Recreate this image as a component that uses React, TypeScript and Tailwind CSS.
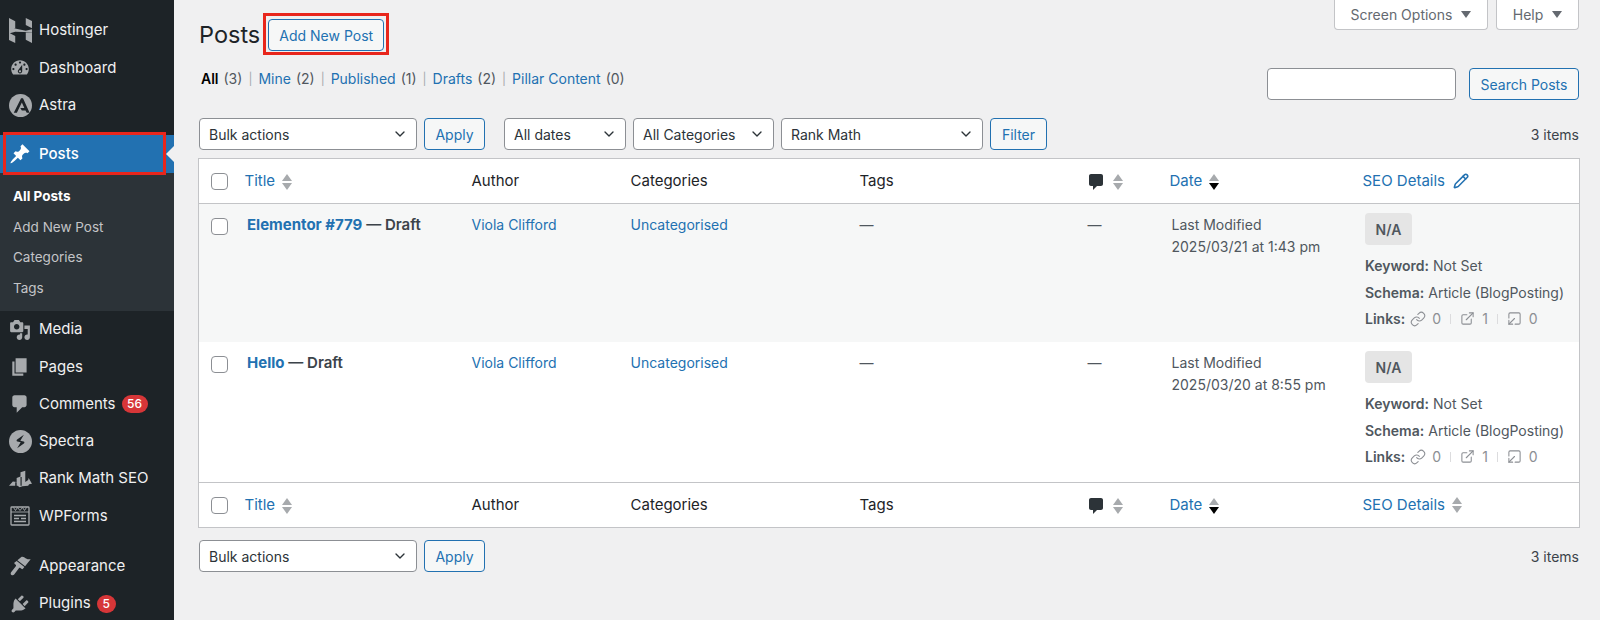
import { ChevronDown, ExternalLink, Link, Pencil, SquareArrowOutDownLeft } from "lucide-react";
import { ReactNode } from "react";

function Dash({ d }: { d: string }) {
  return (
    <svg viewBox="0 0 20 20" className="size-[22px] fill-current">
      <path d={d} />
    </svg>
  );
}

const icons: Record<string, ReactNode> = {
  Hostinger: (
    <svg viewBox="0 0 24 26" className="h-[25px] w-[23px] fill-current">
      <path d="M0 0l6.5 3.4v7.2H0zM17.500 0L24 3.200v7.400l-6.500-3.400zM0 9.600l17.500 3.600 6.500-1.600v3.200l-17.500-.4L0 16.200zM0 15.400l6.500 3.400V26L0 22.800zM17.500 15.200H24V26l-6.500-3.400z" />
    </svg>
  ),
  Dashboard: (
    <Dash d="M3.76 16h12.48c1.1-1.37 1.76-3.11 1.76-5 0-4.42-3.58-8-8-8s-8 3.58-8 8c0 1.89.66 3.63 1.76 5zM10 4c.55 0 1 .45 1 1s-.45 1-1 1-1-.45-1-1 .45-1 1-1zM6 6c.55 0 1 .45 1 1s-.45 1-1 1-1-.45-1-1 .45-1 1-1zm8 0c.55 0 1 .45 1 1s-.45 1-1 1-1-.45-1-1 .45-1 1-1zm-5.37 5.55L12 7v6c0 1.1-.9 2-2 2s-2-.9-2-2c0-.57.24-1.08.63-1.45zM4 10c.55 0 1 .45 1 1s-.45 1-1 1-1-.45-1-1 .45-1 1-1zm12 0c.55 0 1 .45 1 1s-.45 1-1 1-1-.45-1-1 .45-1 1-1zm-5 3c0-.55-.45-1-1-1s-1 .45-1 1 .45 1 1 1 1-.45 1-1z" />
  ),
  Astra: (
    <svg viewBox="0 0 24 24" className="size-[23px]">
      <circle cx="12" cy="12" r="12" className="fill-current" />
      <path d="M12.600 4.500L5 19.500h3.200l5.200-10.600 2.600 5.600h-4.200l1.600 2.600h3.800l1.300 2.400h3L14.600 4.500z" fill="#1d2327" />
    </svg>
  ),
  Posts: (
    <span className="text-white">
      <Dash d="M10.44 3.02l1.82-1.82 6.36 6.35-1.83 1.82c-1.05-.68-2.48-.57-3.41.36l-.75.75c-.92.93-1.04 2.35-.35 3.41l-1.83 1.82-2.41-2.41-2.8 2.79c-.42.42-3.38 2.71-3.8 2.29s1.86-3.39 2.28-3.81l2.79-2.79L4.1 9.36l1.83-1.82c1.05.69 2.48.57 3.4-.36l.75-.75c.93-.92 1.05-2.35.36-3.41z" />
    </span>
  ),
  Media: (
    <Dash d="M13 11V4c0-.55-.45-1-1-1h-1.67L9 1H5L3.67 3H2c-.55 0-1 .45-1 1v7c0 .55.45 1 1 1h10c.55 0 1-.45 1-1zM7 4.5c1.38 0 2.5 1.12 2.5 2.5S8.38 9.5 7 9.5 4.5 8.38 4.5 7 5.62 4.5 7 4.5zM14 6h5v10.5c0 1.38-1.12 2.5-2.5 2.5S14 17.88 14 16.5s1.12-2.5 2.5-2.5c.17 0 .34.02.5.05V9h-3V6zm-4 8.05V13h2v3.5c0 1.38-1.12 2.5-2.5 2.5S7 17.88 7 16.5 8.12 14 9.5 14c.17 0 .34.02.5.05z" />
  ),
  Pages: <Dash d="M6 15V2h10v13H6zm-1 1h8v2H3V5h2v11z" />,
  Comments: (
    <Dash d="M5 2h9c1.1 0 2 .9 2 2v7c0 1.1-.9 2-2 2h-2l-5 5v-5H5c-1.1 0-2-.9-2-2V4c0-1.1.9-2 2-2z" />
  ),
  Spectra: (
    <svg viewBox="0 0 24 24" className="size-[23px]">
      <circle cx="12" cy="12" r="12" className="fill-current" />
      <path
        d="M15.500 5L8.500 9.800c-.9.7-.7 1.800.3 2.100l3.400.9L8.500 19l7-4.800c.9-.7.7-1.800-.3-2.100l-3.400-.9z"
        fill="#1d2327"
      />
    </svg>
  ),
  "Rank Math SEO": (
    <svg viewBox="0 0 24 20" className="h-[20px] w-[23px] fill-current">
      <path d="M0 17l4-4.500 4 .5v-4l4-1.500V3l5-1.500V13l3-2 .5-2 3.500 6-3 .5-1 1.500-6 .500-3 1-2-1.500z" />
      <path d="M6.500 13.500h1.500v4H6.500zM12 8h1.200v9H12z" fill="#1d2327" />
    </svg>
  ),
  WPForms: (
    <svg viewBox="0 0 20 20" className="size-[20px] fill-none stroke-current" strokeWidth="1.300">
      <rect x="1" y="1" width="18" height="18" rx="0.800" />
      <path d="M1 6h18M3.500 1.500l2 3 2-3 2.500 3 2.500-3 2 3 2-3" strokeWidth="0.900" />
      <path d="M4 9.500h12M4 12.500h5M11 12.500h5M4 15.500h12" strokeWidth="1.400" />
    </svg>
  ),
  Appearance: (
    <svg viewBox="0 0 20 20" className="size-[22px] fill-current">
      <path d="M11.500 1.600c1.600-.4 2.600.7 4 1.500 1.200.7 2.700 1 4.200.7l-5.100 6.400-7-5.400z" />
      <path d="M7 5.500l7 5.400-1.300 1.600c-.4.4-1 .5-1.400.1l-1-.8c-.4-.3-1-.2-1.300.2l-4.300 5.800c-.6.800-1.700.9-2.500.3-.8-.6-.9-1.700-.3-2.500l4.300-5.400c.3-.4.300-1-.1-1.300l-.9-.7c-.4-.4-.5-1-.2-1.400z" />
    </svg>
  ),
  Plugins: (
    <Dash d="M13.11 4.360L9.870 7.600 8 5.730l3.240-3.240c.350-.340 1.050-.200 1.560.320.520.510.660 1.210.310 1.550zm-8 1.770l.910-1.120 9.010 9.010-1.190.840c-.710.710-2.630 1.160-3.820 1.160H6.140L4.900 17.260c-.590.590-1.540.590-2.120 0-.590-.580-.590-1.530 0-2.120l1.240-1.240v-3.880c0-1.190.450-3.110 1.090-3.890zm7.260 3.970l3.240-3.240c.340-.350 1.040-.210 1.550.31.520.51.660 1.210.31 1.550l-3.240 3.250z" />
  ),
};

function MenuItem({ label, badge, badgeClass }: { label: string; badge?: string; badgeClass?: string }) {
  return (
    <div className="flex h-[37.3px] items-center text-[15px] text-[#f0f0f1]">
      <span className="flex w-[39px] shrink-0 justify-center pl-[1px] text-[#a7aaad]">{icons[label]}</span>
      <span>{label}</span>
      {badge && (
        <span
          className={`ml-[6px] flex h-[18px] items-center justify-center rounded-full bg-[#d63638] text-[12px] font-medium text-white ${badgeClass}`}
        >
          {badge}
        </span>
      )}
    </div>
  );
}

function Sidebar() {
  return (
    <aside className="w-[174px] shrink-0 bg-[#1d2327] pt-[12px]">
      <MenuItem label="Hostinger" />
      <MenuItem label="Dashboard" />
      <MenuItem label="Astra" />
      <div className="relative mt-[11px] flex h-[38px] items-center bg-[#2271b1] text-[15px] font-medium text-white">
        <span className="flex w-[39px] shrink-0 justify-center">{icons.Posts}</span>
        <span>Posts</span>
        <span className="absolute right-0 top-[11px] border-y-[8px] border-r-[8px] border-y-transparent border-r-[#f0f0f1]" />
        <span className="absolute -top-[3px] left-[3px] h-[43px] w-[163px] border-[3px] border-[#e8261c]" />
      </div>
      <div className="flex h-[138px] flex-col bg-[#2c3338] pl-[13px] pt-[8px] text-[13.5px] text-[#c3c4c7]">
        <div className="flex h-[31px] items-center font-bold text-white">All Posts</div>
        <div className="flex h-[30px] items-center">Add New Post</div>
        <div className="flex h-[31px] items-center">Categories</div>
        <div className="flex h-[31px] items-center">Tags</div>
      </div>
      <div>
        <MenuItem label="Media" />
        <MenuItem label="Pages" />
        <MenuItem label="Comments" badge="56" badgeClass="w-[26px]" />
        <MenuItem label="Spectra" />
        <MenuItem label="Rank Math SEO" />
        <MenuItem label="WPForms" />
      </div>
      <div className="pt-[13px]">
        <MenuItem label="Appearance" />
        <MenuItem label="Plugins" badge="5" badgeClass="w-[19px]" />
      </div>
    </aside>
  );
}

function Sort({ dark }: { dark?: boolean }) {
  return (
    <span className="ml-[7px] inline-flex flex-col gap-[2px] align-middle">
      <span className="border-x-[5px] border-b-[7px] border-x-transparent border-b-[#a7aaad]" />
      <span className={`border-x-[5px] border-t-[7px] border-x-transparent ${dark ? "border-t-black" : "border-t-[#a7aaad]"}`} />
    </span>
  );
}

function Select({ label, className }: { label: string; className: string }) {
  return (
    <div
      className={`flex h-[32px] items-center justify-between rounded-[4px] border border-[#8c8f94] bg-white pl-[9px] pr-[8px] text-[14px] text-[#2c3338] ${className}`}
    >
      <span>{label}</span>
      <ChevronDown className="size-[16px] text-[#2c3338]" strokeWidth={2} />
    </div>
  );
}

function OutlineButton({ label, className }: { label: string; className: string }) {
  return (
    <button
      className={`flex h-[32px] items-center justify-center rounded-[4px] border border-[#2271b1] bg-[#f6f7f7] text-[14px] text-[#2271b1] ${className}`}
    >
      {label}
    </button>
  );
}

function Check() {
  return <span className="block size-[17px] rounded-[4px] border border-[#8c8f94] bg-white" />;
}

function HeaderRow({ top, editable }: { top?: boolean; editable?: boolean }) {
  const border = top ? "border-b border-[#c3c4c7]" : "border-t border-[#c3c4c7]";
  const th = `${border} px-[6.5px] text-left text-[15px] font-normal text-[#1d2327]`;
  return (
    <tr className="h-[45px]">
      <th className={`${border} pl-[12px] text-left font-normal`}>
        <Check />
      </th>
      <th className={th}>
        <span className="text-[#2271b1]">Title</span>
        <Sort />
      </th>
      <th className={th}>Author</th>
      <th className={th}>Categories</th>
      <th className={th}>Tags</th>
      <th className={th}>
        <span className="inline-flex items-center align-middle text-[#2c3338]">
          <svg viewBox="0 0 20 20" className="-ml-[2px] size-[20px] fill-current">
            <path d="M5 2h10c1.100 0 2 .9 2 2v8c0 1.100-.9 2-2 2h-4l-4 4v-4H5c-1.100 0-2-.9-2-2V4c0-1.100.9-2 2-2z" />
          </svg>
          <Sort />
        </span>
      </th>
      <th className={th}>
        <span className="text-[#2271b1]">Date</span>
        <Sort dark />
      </th>
      <th className={th}>
        <span className="inline-flex items-center align-middle text-[#2271b1]">
          SEO Details
          {editable ? <Pencil className="ml-[8px] size-[16px]" strokeWidth={2.3} /> : <Sort />}
        </span>
      </th>
    </tr>
  );
}

function PostRow({ title, date, shaded }: { title: string; date: string; shaded?: boolean }) {
  const td = "px-[6.5px] pt-[10px] align-top";
  return (
    <tr className={`text-[14px] text-[#50575e] ${shaded ? "h-[138px] bg-[#f6f7f7]" : "h-[140px] bg-white"}`}>
      <td className="pl-[12px] pt-[14px] align-top">
        <Check />
      </td>
      <td className={`${td} pl-[9px] text-[15px] font-semibold text-[#3c434a]`}>
        <span className="font-bold text-[#2271b1]">{title}</span> — Draft
      </td>
      <td className={`${td} text-[#2271b1]`}>Viola Clifford</td>
      <td className={`${td} text-[#2271b1]`}>Uncategorised</td>
      <td className={td}>—</td>
      <td className={td}>—</td>
      <td className={`${td} pl-[8.5px] leading-[22px]`}>
        Last Modified
        <br />
        {date}
      </td>
      <td className="px-[9px] pt-[9px] align-top">
        <span className="flex h-[32px] w-[47px] items-center justify-center rounded-[4px] bg-[#e5e5e5] font-semibold text-[#50575e]">
          N/A
        </span>
        <div className="mt-[7px] flex h-[27px] items-center whitespace-nowrap">
          <b className="mr-1 font-semibold">Keyword:</b> Not Set
        </div>
        <div className="flex h-[26px] items-center whitespace-nowrap">
          <b className="mr-1 font-semibold">Schema:</b> Article (BlogPosting)
        </div>
        <div className="flex h-[27px] items-center whitespace-nowrap">
          <b className="mr-[5px] font-semibold">Links:</b>
          <span className="flex items-center text-[#8c8f94]">
            <Link className="size-[16px]" strokeWidth={1.6} />
            <span className="ml-[6px]">0</span>
            <span className="mx-[9px] h-[10px] w-px bg-[#dcdcde]" />
            <ExternalLink className="size-[15px]" strokeWidth={1.7} />
            <span className="ml-[7px]">1</span>
            <span className="mx-[9px] h-[10px] w-px bg-[#dcdcde]" />
            <SquareArrowOutDownLeft className="size-[15px]" strokeWidth={1.7} />
            <span className="ml-[7px]">0</span>
          </span>
        </div>
      </td>
    </tr>
  );
}

const filters = [
  { label: "All", count: "(3)" },
  { label: "Mine", count: "(2)" },
  { label: "Published", count: "(1)" },
  { label: "Drafts", count: "(2)" },
  { label: "Pillar Content", count: "(0)" },
];

export default function App() {
  return (
    <div className="flex h-[620px] overflow-hidden bg-[#f0f0f1] font-['Inter',sans-serif]">
      <Sidebar />
      <main className="min-w-0 flex-1 pl-[24px] pr-[21px]">
        <div className="flex justify-between">
          <div className="flex items-center pl-[1px] pt-[19px]">
            <h1 className="text-[23.5px] font-normal leading-[32px] text-[#1d2327]">Posts</h1>
            <div className="relative ml-[8px]">
              <button className="flex h-[32px] w-[116px] items-center justify-center rounded-[4px] border border-[#2271b1] bg-[#f6f7f7] text-[14px] text-[#2271b1]">
                Add New Post
              </button>
              <span className="absolute -left-[5px] -top-[6px] h-[42px] w-[126px] border-[3.5px] border-[#e8261c]" />
            </div>
          </div>
          <div className="flex gap-[8px] self-start text-[14px] text-[#646970]">
            <div className="flex h-[30px] w-[154px] items-center justify-center gap-[9px] rounded-b-[4px] border border-t-0 border-[#c3c4c7] bg-white">
              Screen Options
              <span className="border-x-[5px] border-t-[7px] border-x-transparent border-t-[#646970]" />
            </div>
            <div className="flex h-[30px] w-[83px] items-center justify-center gap-[9px] rounded-b-[4px] border border-t-0 border-[#c3c4c7] bg-white">
              Help
              <span className="border-x-[5px] border-t-[7px] border-x-transparent border-t-[#646970]" />
            </div>
          </div>
        </div>

        <div className="mt-[17px] flex items-start justify-between">
          <div className="flex items-center pl-[3px] pt-[1px] text-[14px] leading-[20px] text-[#50575e]">
            {filters.map((f, i) => (
              <span key={f.label} className="flex items-center">
                {i > 0 && <span className="mx-[6px] text-[12px] text-[#a7aaad]">|</span>}
                <span className={i === 0 ? "font-semibold text-black" : "text-[#2271b1]"}>{f.label}</span>
                <span className="ml-[5px]">{f.count}</span>
              </span>
            ))}
          </div>
          <div className="flex gap-[13px]">
            <div className="h-[32px] w-[189px] rounded-[4px] border border-[#8c8f94] bg-white" />
            <OutlineButton label="Search Posts" className="w-[110px]" />
          </div>
        </div>

        <div className="mt-[18px] flex items-center">
          <div className="flex items-center pl-[1px]">
            <Select label="Bulk actions" className="w-[218px]" />
            <OutlineButton label="Apply" className="ml-[7px] w-[61px]" />
            <Select label="All dates" className="ml-[19px] w-[122px]" />
            <Select label="All Categories" className="ml-[7px] w-[141px]" />
            <Select label="Rank Math" className="ml-[7px] w-[202px]" />
            <OutlineButton label="Filter" className="ml-[7px] w-[57px]" />
          </div>
          <span className="ml-auto text-[14px] text-[#3c434a]">3 items</span>
        </div>

        <table className="mt-[8px] w-[1381px] table-fixed border-separate border-spacing-0 border border-[#c3c4c7] bg-white">
          <colgroup>
            <col className="w-[39px]" />
            <col className="w-[227px]" />
            <col className="w-[159px]" />
            <col className="w-[229px]" />
            <col className="w-[228px]" />
            <col className="w-[82px]" />
            <col className="w-[193px]" />
            <col className="w-[223px]" />
          </colgroup>
          <thead>
            <HeaderRow top editable />
          </thead>
          <tbody>
            <PostRow title="Elementor #779" date="2025/03/21 at 1:43 pm" shaded />
            <PostRow title="Hello" date="2025/03/20 at 8:55 pm" />
          </tbody>
          <tfoot>
            <HeaderRow />
          </tfoot>
        </table>

        <div className="mt-[12px] flex items-center">
          <div className="flex items-center pl-[1px]">
            <Select label="Bulk actions" className="w-[218px]" />
            <OutlineButton label="Apply" className="ml-[7px] w-[61px]" />
          </div>
          <span className="ml-auto text-[14px] text-[#3c434a]">3 items</span>
        </div>
      </main>
    </div>
  );
}
